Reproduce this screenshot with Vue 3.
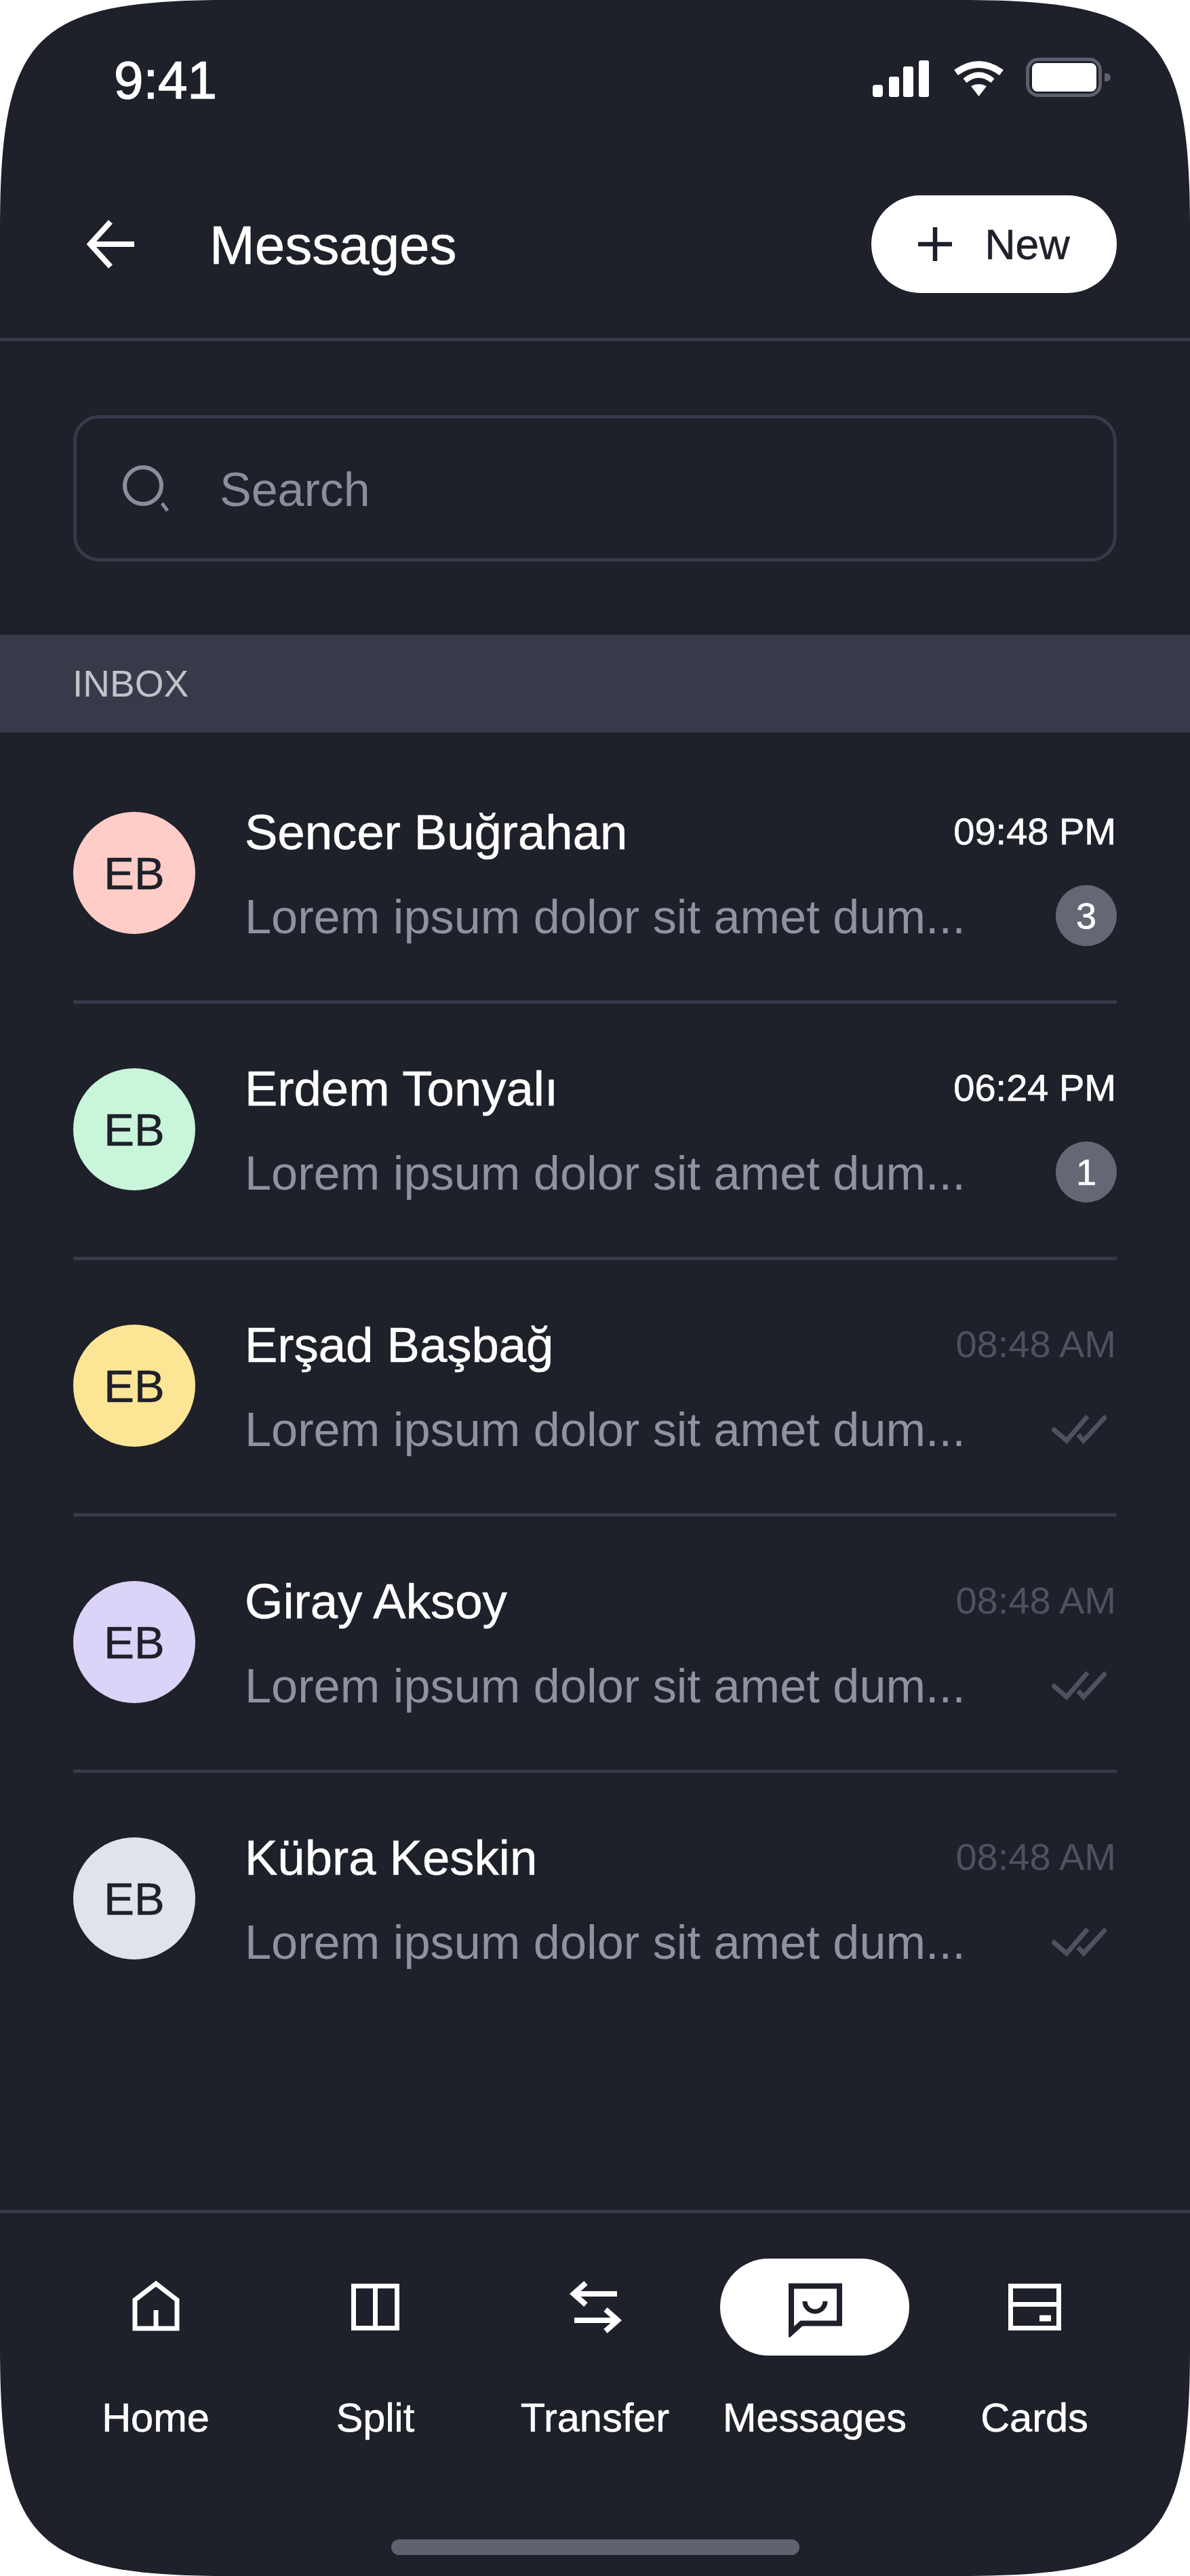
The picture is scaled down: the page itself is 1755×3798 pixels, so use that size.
<template>
  <div class="phone">
    <!-- Status bar -->
    <div class="status-bar">
      <span class="clock">9:41</span>
      <div class="status-icons">
        <svg width="83" height="54" viewBox="0 0 83 54">
          <rect x="0" y="36" width="15" height="18" rx="4" fill="#fff" />
          <rect x="24" y="24" width="15" height="30" rx="3" fill="#fff" />
          <rect x="45" y="9" width="15" height="45" rx="3" fill="#fff" />
          <rect x="68" y="0" width="15" height="54" rx="3" fill="#fff" />
        </svg>
        <svg class="wifi" width="77" height="54" viewBox="0 0 77 54">
          <path d="M5 18Q38.5 -6 72 18" fill="none" stroke="#fff" stroke-width="10" />
          <path d="M18 30Q38.5 13 59 30" fill="none" stroke="#fff" stroke-width="8" />
          <path d="M27 38Q38.5 32 50 38L38.5 53Z" fill="#fff" />
        </svg>
        <svg class="battery" width="125" height="58" viewBox="0 0 125 58">
          <rect x="2.5" y="2.5" width="107" height="53" rx="16" fill="none" stroke="#5c5f6d" stroke-width="5" />
          <rect x="9" y="8" width="95" height="42" rx="8" fill="#fff" />
          <path d="M116 23h3a6 6 0 0 1 6 6v0a6 6 0 0 1 -6 6h-3z" fill="#5c5f6d" />
        </svg>
      </div>
    </div>

    <!-- Header -->
    <header class="header">
      <div class="header-left">
        <svg width="72" height="72" viewBox="0 0 72 72">
          <path d="M35 3L5 36L35 69M5 36H70" fill="none" stroke="#fff" stroke-width="8" />
        </svg>
        <h1>Messages</h1>
      </div>
      <button class="new-btn">
        <svg width="50" height="50" viewBox="0 0 50 50">
          <path d="M25 0V50M0 25H50" fill="none" stroke="#1e202a" stroke-width="6.5" />
        </svg>
        <span>New</span>
      </button>
    </header>

    <!-- Search -->
    <section class="search-wrap">
      <div class="search">
        <svg width="70" height="70" viewBox="0 0 70 70">
          <circle cx="30" cy="31" r="27" fill="none" stroke="#8a8d9c" stroke-width="6" />
          <path d="M58 57L66 68" fill="none" stroke="#8a8d9c" stroke-width="5" />
        </svg>
        <span class="search-text">Search</span>
      </div>
    </section>

    <div class="section-label">INBOX</div>

    <!-- Conversations -->
    <ul class="list">
      <li v-for="item in conversations" :key="item.name" class="row">
        <div class="avatar" :style="{ background: item.color }">EB</div>
        <div class="row-body">
          <div class="row-line">
            <span class="name">{{ item.name }}</span>
            <span :class="['time', { unread: item.count }]">{{ item.time }}</span>
          </div>
          <div class="row-line preview-line">
            <span class="preview">Lorem ipsum dolor sit amet dum...</span>
            <span v-if="item.count" class="badge">{{ item.count }}</span>
            <svg v-else class="check" width="81" height="48" viewBox="0 0 81 48">
              <path d="M1 24L22 42L53 6M39 33L47 42L80 6" fill="none" stroke="#4e5260" stroke-width="7" />
            </svg>
          </div>
        </div>
      </li>
    </ul>

    <!-- Bottom navigation -->
    <nav class="nav">
      <div class="nav-items">
        <div v-for="tab in tabs" :key="tab.label" class="nav-item">
          <div :class="['nav-icon', { active: tab.label === 'Messages' }]">
            <svg width="84" height="88" viewBox="0 0 84 88" fill="none" stroke="#fff" stroke-width="7">
              <template v-if="tab.label === 'Home'">
                <path d="M42 9L11 33V75H73V33Z" />
                <path d="M42 48V75" />
              </template>
              <template v-else-if="tab.label === 'Split'">
                <rect x="9.5" y="12.5" width="64" height="62" />
                <path d="M41.5 12.5V74.5" />
              </template>
              <template v-else-if="tab.label === 'Transfer'">
                <path d="M28 8L10 24L28 40M10 24H74" stroke-width="8" />
                <path d="M57 47L75 63L57 79M11 63H75" stroke-width="8" />
              </template>
              <template v-else-if="tab.label === 'Messages'">
                <path d="M7 12.5H78V67.5H22L7 81Z" stroke="#1e202a" stroke-width="8" />
                <path d="M27 35a15 15 0 0 0 30 0" stroke="#1e202a" stroke-width="7" />
              </template>
              <template v-else>
                <rect x="6.5" y="12.5" width="71" height="62" />
                <path d="M6.5 39.5H77.5" />
                <rect x="49" y="55.5" width="17" height="9" fill="#fff" stroke="none" />
              </template>
            </svg>
          </div>
          <span class="nav-label">{{ tab.label }}</span>
        </div>
      </div>
      <div class="home-bar"></div>
    </nav>
  </div>
</template>

<script setup>
const conversations = [
  { name: "Sencer Buğrahan", time: "09:48 PM", count: 3, color: "#ffcdc8" },
  { name: "Erdem Tonyalı", time: "06:24 PM", count: 1, color: "#c9f5da" },
  { name: "Erşad Başbağ", time: "08:48 AM", count: 0, color: "#fce595" },
  { name: "Giray Aksoy", time: "08:48 AM", count: 0, color: "#dcd3f9" },
  { name: "Kübra Keskin", time: "08:48 AM", count: 0, color: "#e0e3ea" },
];

const tabs = [
  { label: "Home" },
  { label: "Split" },
  { label: "Transfer" },
  { label: "Messages" },
  { label: "Cards" },
];
</script>

<style>
html,
body {
  background: #fff;
}
</style>

<style scoped>
.phone {
  width: 1755px;
  height: 3798px;
  display: flex;
  flex-direction: column;
  background: #1e202a;
  /* device corners are squircles, not circles */
  clip-path: path("M340 0H1415C1705 0 1755 50 1755 340V3458C1755 3748 1705 3798 1415 3798H340C50 3798 0 3748 0 3458V340C0 50 50 0 340 0Z");
  color: #fff;
  font-family: "Liberation Sans", Arial, sans-serif;
}

/* Status bar */
.status-bar {
  height: 222px;
  flex: none;
  box-sizing: border-box;
  padding: 78px 117px 0 168px;
  display: flex;
  justify-content: space-between;
  align-items: flex-start;
}

.clock {
  font-size: 78px;
  line-height: 80px;
  -webkit-text-stroke: 1.4px #fff;
}

.status-icons {
  display: flex;
  align-items: flex-end;
  height: 65px;
}

.wifi {
  margin-left: 35px;
}

.battery {
  margin-left: 31px;
}

/* Header */
.header {
  height: 281px;
  flex: none;
  box-sizing: border-box;
  padding: 0 108px 0 128px;
  display: flex;
  align-items: center;
  justify-content: space-between;
  border-bottom: 5px solid #363a49;
}

.header-left {
  display: flex;
  align-items: center;
  gap: 109px;
}

h1 {
  margin: 4px 0 0;
  font-size: 80px;
  font-weight: 400;
  line-height: 90px;
  -webkit-text-stroke: 0.6px #fff;
}

.new-btn {
  width: 362px;
  height: 144px;
  border: 0;
  border-radius: 72px;
  background: #fff;
  color: #1e202a;
  font-family: inherit;
  font-size: 62.5px;
  -webkit-text-stroke: 0.6px #1e202a;
  display: flex;
  align-items: center;
  justify-content: center;
  gap: 48px;
  padding: 0;
}

/* Search */
.search-wrap {
  flex: none;
  padding: 109px 108px 108px;
}

.search {
  height: 216px;
  box-sizing: border-box;
  border: 5px solid #363a49;
  border-radius: 38px;
  padding-left: 68px;
  display: flex;
  align-items: center;
  gap: 73px;
  color: #8a8d9c;
  font-size: 70px;
}

.search-text {
  margin-top: 4px;
}

.section-label {
  flex: none;
  height: 144px;
  box-sizing: border-box;
  padding-left: 107px;
  display: flex;
  align-items: center;
  background: #373a49;
  color: #bfc4c9;
  font-size: 55px;
}

/* Conversations */
.list {
  list-style: none;
  margin: 0;
  padding: 22px 108px 0;
}

.row {
  height: 378px;
  box-sizing: border-box;
  display: flex;
  align-items: center;
  padding-bottom: 3px;
  border-bottom: 5px solid #363a49;
}

.row:last-child {
  border-bottom-color: transparent;
}

.avatar {
  width: 180px;
  height: 180px;
  flex: none;
  border-radius: 50%;
  display: flex;
  align-items: center;
  justify-content: center;
  color: #1e202a;
  font-size: 67px;
  -webkit-text-stroke: 0.6px #1e202a;
}

.row-body {
  flex: 1;
  margin-left: 73px;
  margin-top: 4px;
  display: flex;
  flex-direction: column;
  gap: 35px;
}

.row-line {
  display: flex;
  align-items: center;
  justify-content: space-between;
  height: 90px;
}

.name {
  font-size: 72.5px;
  -webkit-text-stroke: 0.6px #fff;
}

.time {
  font-size: 56px;
  color: #4e5260;
  margin-top: -2px;
  margin-right: 1px;
}

.time.unread {
  color: #fff;
  -webkit-text-stroke: 0.6px #fff;
}

.preview {
  font-size: 70.3px;
  color: #8f92a1;
}

.badge {
  width: 90px;
  height: 90px;
  margin-top: -4px;
  border-radius: 50%;
  background: #646875;
  display: flex;
  align-items: center;
  justify-content: center;
  font-size: 54px;
  -webkit-text-stroke: 0.6px #fff;
}

.check {
  margin-top: -4px;
  margin-right: 15px;
}

/* Bottom navigation */
.nav {
  margin-top: auto;
  border-top: 5px solid #363a49;
  padding-top: 67px;
  padding-bottom: 31px;
  display: flex;
  flex-direction: column;
  align-items: center;
}

.nav-items {
  display: flex;
}

.nav-item {
  width: 324px;
  display: flex;
  flex-direction: column;
  align-items: center;
}

.nav-icon {
  width: 279px;
  height: 143px;
  border-radius: 72px;
  display: flex;
  align-items: center;
  justify-content: center;
}

.nav-icon.active {
  background: #fff;
}

.nav-label {
  margin-top: 57px;
  font-size: 59.5px;
  line-height: 70px;
  -webkit-text-stroke: 0.6px #fff;
}

.home-bar {
  width: 602px;
  height: 23px;
  margin-top: 144px;
  border-radius: 12px;
  background: #5f6370;
}
</style>
